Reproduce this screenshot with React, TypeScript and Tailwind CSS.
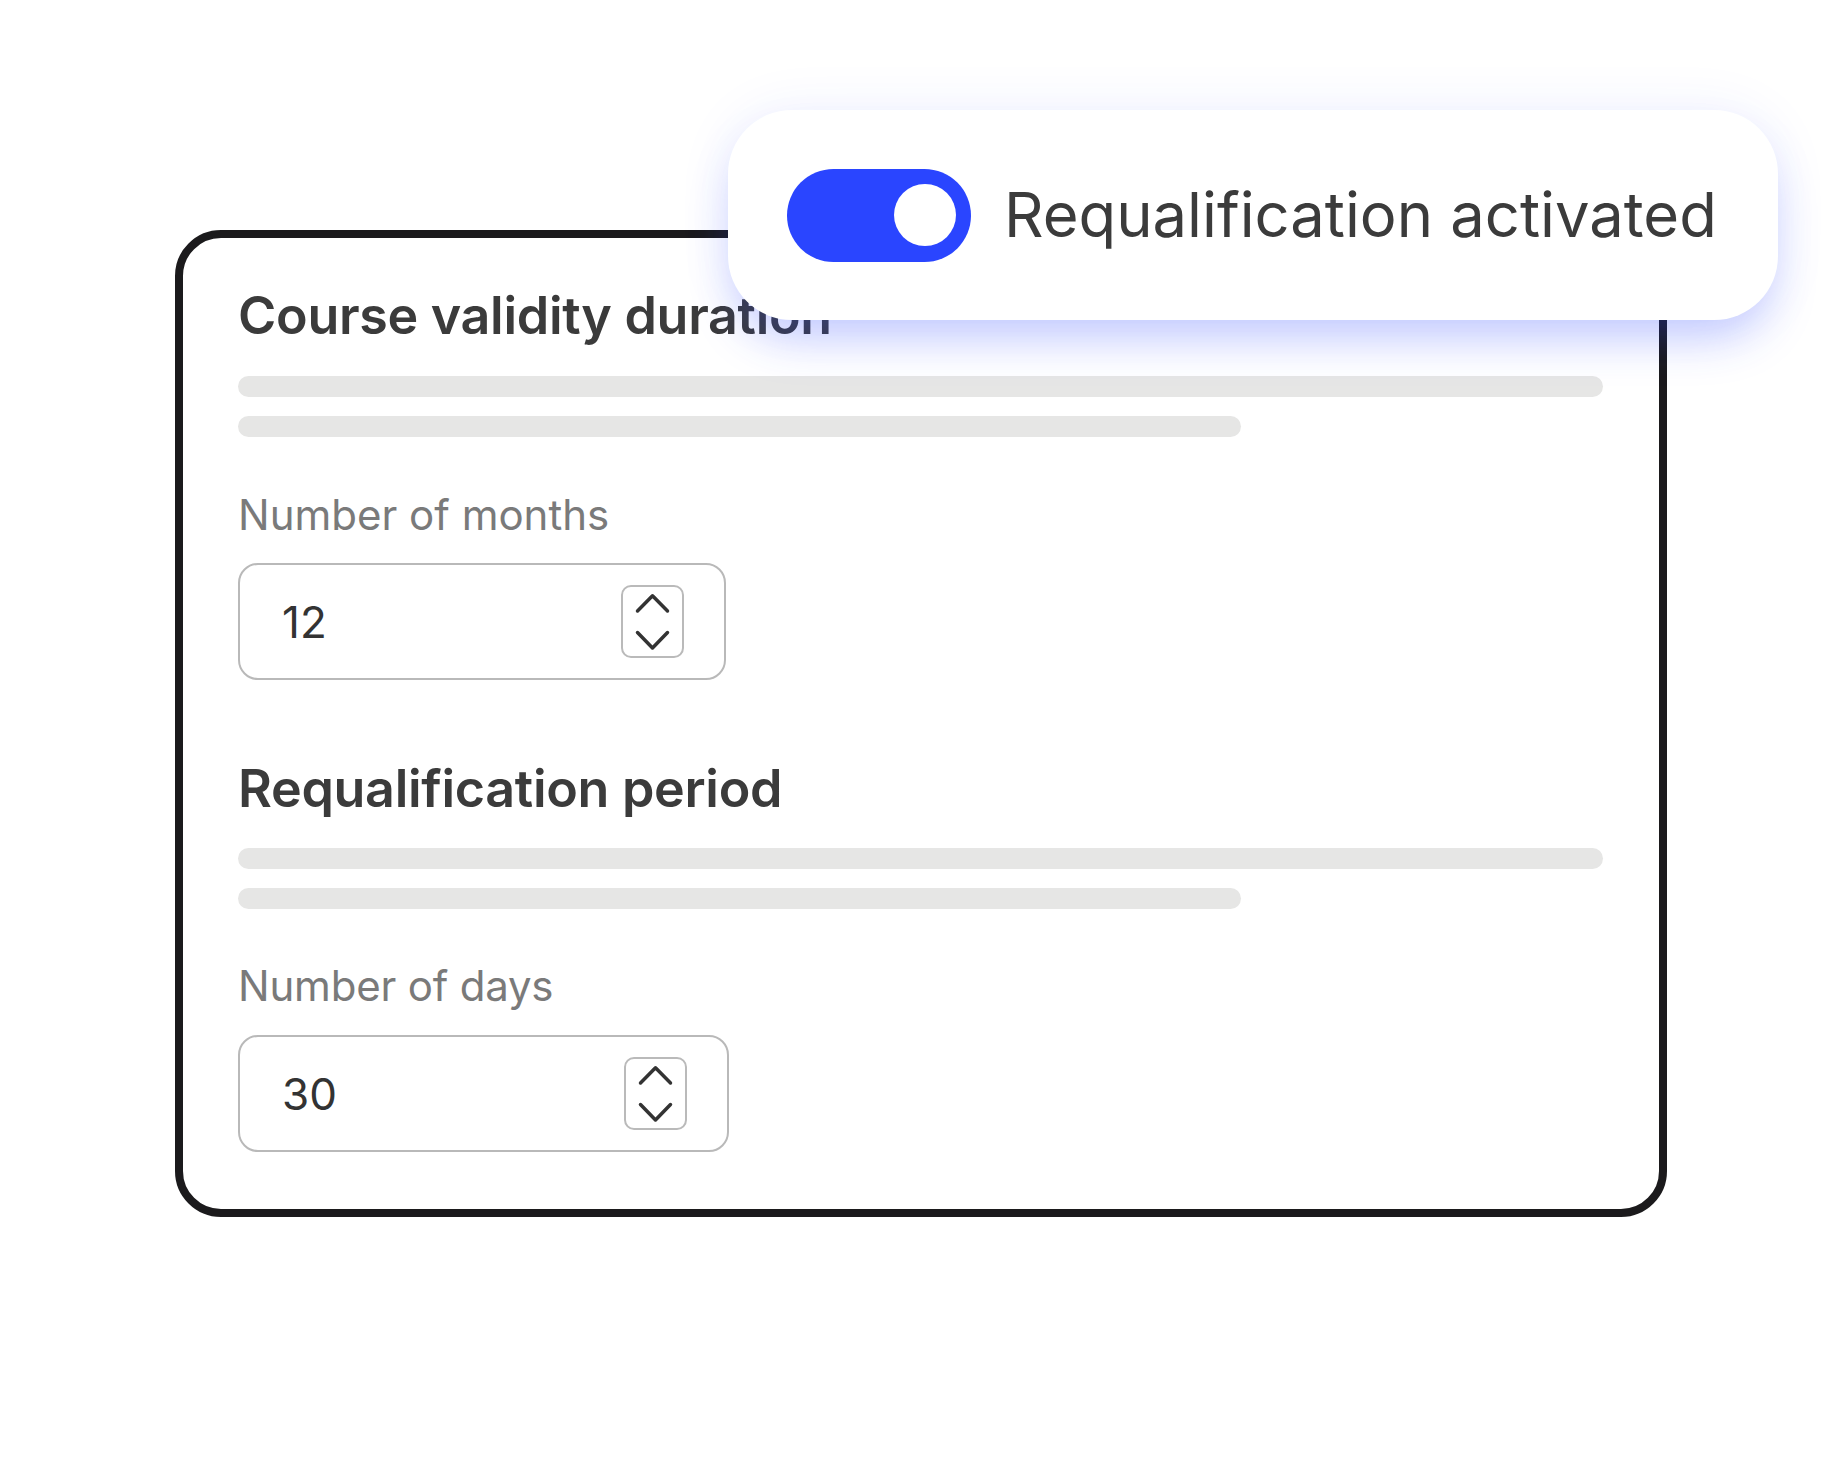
import React from "react";

function Stepper() {
  return (
    <div className="w-[63px] h-[73px] border-2 border-[#bababa] rounded-[10px] flex items-center justify-center">
      <svg width="59" height="69" viewBox="0 0 59 69" fill="none">
        <polyline points="14.5,24 29.5,8.75 44.5,24" stroke="#333333" strokeWidth="3.5" strokeLinecap="round" strokeLinejoin="round" />
        <polyline points="14.5,45.5 29.5,61 44.5,45.5" stroke="#333333" strokeWidth="3.5" strokeLinecap="round" strokeLinejoin="round" />
      </svg>
    </div>
  );
}

function NumberInput({ value, w }: { value: string; w: string }) {
  return (
    <div className={`${w} h-[117px] border-2 border-[#b9b9b9] rounded-[20px] flex items-center justify-between pl-[42px] pr-[40px]`}>
      <span className="text-[44px] leading-none text-[#333333]">{value}</span>
      <Stepper />
    </div>
  );
}

function Bars() {
  return (
    <div className="flex flex-col gap-[19px]">
      <div className="h-[21px] w-full rounded-full bg-[#e6e6e5]" />
      <div className="h-[21px] w-[1003px] rounded-full bg-[#e6e6e5]" />
    </div>
  );
}

export default function App() {
  return (
    <div
      className="relative w-[1840px] h-[1472px] bg-white overflow-hidden"
      style={{ fontFamily: "Inter, 'Noto Sans', sans-serif" }}
    >
      <div className="ml-[175px] mt-[230px] w-[1492px] h-[987px] border-[8px] border-[#1b1a1c] rounded-[46px] pl-[55px] pr-[56px] pt-[52px] flex flex-col">
        <h2 className="text-[52px] leading-none font-semibold text-[#3b3b3b] tracking-[-0.3px]">Course validity duration</h2>
        <div className="mt-[34px]">
          <Bars />
        </div>
        <div className="mt-[57px] text-[42px] leading-none text-[#7a7a7a]">Number of months</div>
        <div className="mt-[27px]">
          <NumberInput value="12" w="w-[488px]" />
        </div>
        <h2 className="mt-[83px] text-[52px] leading-none font-semibold text-[#3b3b3b] tracking-[-0.3px]">Requalification period</h2>
        <div className="mt-[33px]">
          <Bars />
        </div>
        <div className="mt-[56px] text-[42px] leading-none text-[#7a7a7a] tracking-[-0.2px]">Number of days</div>
        <div className="mt-[28px]">
          <NumberInput value="30" w="w-[491px]" />
        </div>
      </div>

      <div className="absolute left-[728px] top-[110px] w-[1050px] h-[210px] rounded-[64px] bg-white flex items-center pl-[59px] gap-[33px] shadow-[0_26px_48px_-10px_rgba(43,69,255,0.28),0_0_56px_rgba(43,69,255,0.07)]">
        <div className="w-[184px] h-[93px] rounded-full bg-[#2a45ff] flex items-center justify-end pr-[15px]">
          <div className="w-[62px] h-[62px] rounded-full bg-white" />
        </div>
        <span className="text-[61.5px] leading-none text-[#3b3b3b]">Requalification activated</span>
      </div>
    </div>
  );
}
